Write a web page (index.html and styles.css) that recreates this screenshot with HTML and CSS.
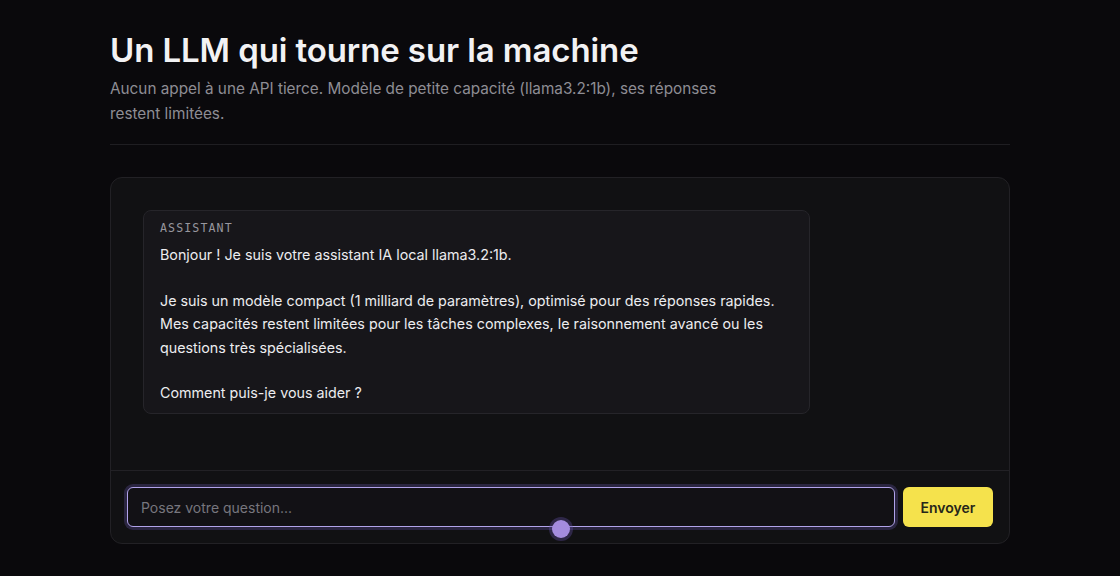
FILE: index.html
```html
<!DOCTYPE html>
<html lang="fr">
<head>
<meta charset="utf-8">
<title>LLM local</title>
<link rel="stylesheet" href="styles.css">
</head>
<body>
<main class="page">
  <header class="intro">
    <h1 class="title">Un LLM qui tourne sur la machine</h1>
    <p class="lead">Aucun appel à une API tierce. Modèle de petite capacité (llama3.2:1b), ses réponses restent limitées.</p>
  </header>
  <section class="chat">
    <div class="messages">
      <div class="bubble">
        <div class="role">ASSISTANT</div>
        <p class="msg">Bonjour ! Je suis votre assistant IA local llama3.2:1b.</p>
        <p class="msg">Je suis un modèle compact (1 milliard de paramètres), optimisé pour des réponses rapides. Mes capacités restent limitées pour les tâches complexes, le raisonnement avancé ou les questions très spécialisées.</p>
        <p class="msg">Comment puis-je vous aider ?</p>
      </div>
    </div>
    <form class="composer">
      <div class="field">
        <input class="input" type="text" placeholder="Posez votre question...">
        <span class="dot"></span>
      </div>
      <button class="send" type="button">Envoyer</button>
    </form>
  </section>
</main>
</body>
</html>
```

FILE: styles.css
```css
* { box-sizing: border-box; }
html, body { margin: 0; padding: 0; }
body {
  background: #0a090c;
  color: #ededf0;
  font-family: Inter, "Noto Sans", sans-serif;
}
.page {
  width: 900px;
  margin: 0 auto;
  padding-top: 30px;
}
.intro {
  border-bottom: 1px solid #1f1e22;
  padding-bottom: 18px;
}
.title {
  margin: 0;
  font-size: 33px;
  line-height: 40px;
  font-weight: 600;
  letter-spacing: -0.1px;
  color: #f2f2f4;
}
.lead {
  margin: 6px 0 0;
  width: 620px;
  font-size: 15.3px;
  line-height: 25px;
  color: #8e8d94;
}
.chat {
  margin-top: 32px;
  background: #111113;
  border: 1px solid #222125;
  border-radius: 12px;
  overflow: hidden;
}
.messages {
  height: 292px;
  padding: 32px;
}
.bubble {
  width: 667px;
  background: #17161a;
  border: 1px solid #26252a;
  border-radius: 8px;
  padding: 10px 16px 8px;
}
.role {
  font-family: "DejaVu Sans Mono", "Liberation Mono", monospace;
  font-size: 11.6px;
  letter-spacing: 1.1px;
  line-height: 14px;
  color: #98979e;
  margin-bottom: 8px;
}
.msg {
  margin: 0 0 22px;
  font-size: 14.3px;
  line-height: 23.6px;
  color: #ececef;
}
.msg:last-child { margin-bottom: 0; }
.composer {
  display: flex;
  gap: 8px;
  margin: 0;
  padding: 16px 16px 16px;
  border-top: 1px solid #222125;
}
.field {
  position: relative;
  flex: 1;
}
.input {
  width: 100%;
  height: 40px;
  padding: 0 13px;
  background: #121115;
  border: 1.5px solid #b1a3ea;
  border-radius: 6px;
  box-shadow: 0 0 0 3px rgba(120, 100, 200, 0.25);
  font-family: Inter, "Noto Sans", sans-serif;
  font-size: 14px;
  color: #ececef;
  outline: none;
}
.input::placeholder { color: #77767e; }
.dot {
  position: absolute;
  left: 425px;
  top: 33px;
  width: 18px;
  height: 18px;
  border-radius: 50%;
  background: #a48cdf;
  box-shadow: 0 0 0 3px rgba(100, 80, 170, 0.35);
}
.send {
  width: 90px;
  height: 40px;
  border: none;
  border-radius: 6px;
  background: #f5e24c;
  color: #26261a;
  font-family: Inter, "Noto Sans", sans-serif;
  font-size: 14px;
  font-weight: 600;
}
```
